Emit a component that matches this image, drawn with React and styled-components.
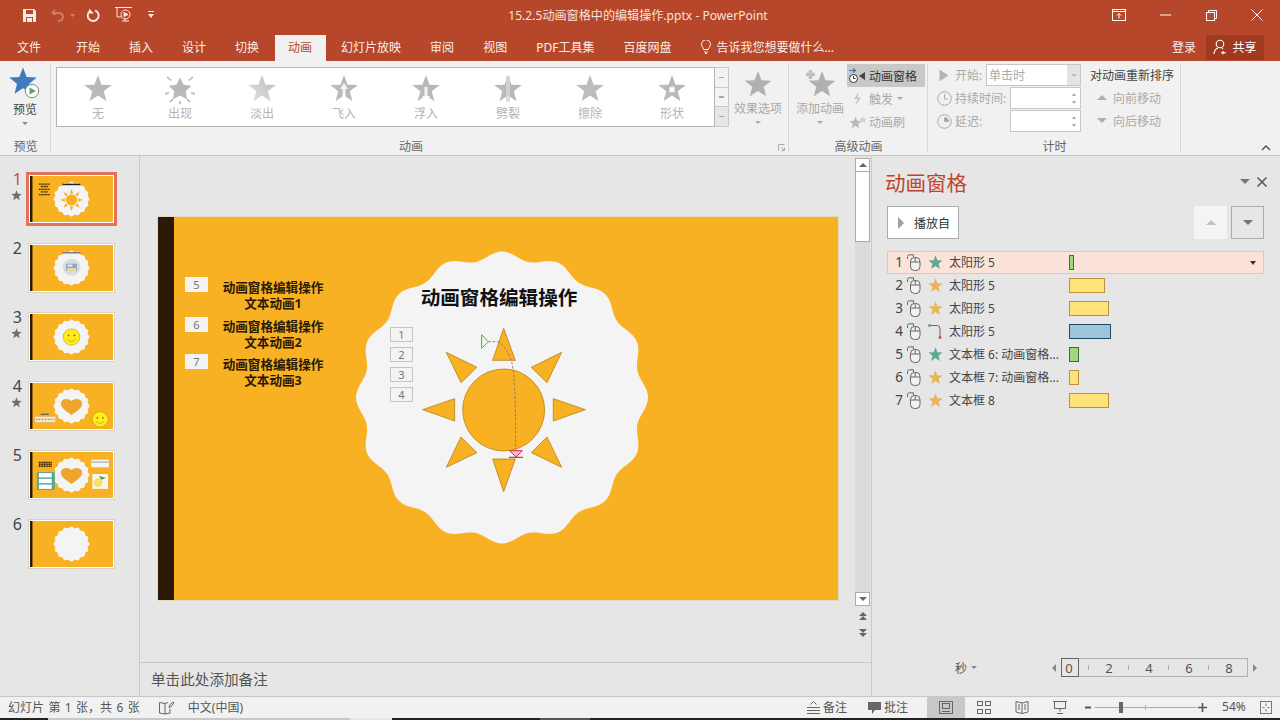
import React from "react";
import styled, { createGlobalStyle } from "styled-components";

const FONT = `"Noto Sans", "Noto Sans CJK SC", sans-serif`;

const GlobalStyle = createGlobalStyle`
  html, body { margin: 0; padding: 0; background: #e6e6e6; }
  body { font-family: ${FONT}; font-size: 12px; color: #444; }
  * { box-sizing: border-box; }
`;

const starPoints = (cx, cy, R, r = R * 0.42) => {
  const pts = [];
  for (let i = 0; i < 10; i++) {
    const a = -Math.PI / 2 + (i * Math.PI) / 5;
    const rad = i % 2 ? r : R;
    pts.push(`${(cx + rad * Math.cos(a)).toFixed(2)},${(cy + rad * Math.sin(a)).toFixed(2)}`);
  }
  return pts.join(" ");
};

const blobPath = (cx, cy, R, amp, lobes = 16) => {
  const pts = [];
  for (let i = 0; i < 320; i++) {
    const t = (i / 320) * Math.PI * 2;
    const rad = R + amp * Math.cos(lobes * t);
    pts.push(`${(cx + rad * Math.sin(t)).toFixed(2)} ${(cy - rad * Math.cos(t)).toFixed(2)}`);
  }
  return `M${pts.join("L")}Z`;
};

const Page = styled.div`
  width: 1280px;
  height: 720px;
  overflow: hidden;
  display: flex;
  flex-direction: column;
  background: #e6e6e6;
`;

/* title bar */
const TitleBar = styled.div`
  height: 35px;
  padding-bottom: 5px;
  background: #b7472a;
  display: grid;
  grid-template-columns: 1fr auto 1fr;
  align-items: center;
  color: #fff;
`;

const Qat = styled.div`
  display: flex;
  align-items: center;
  padding-left: 22px;
`;

const QatIcon = styled.svg`
  display: block;
  margin-right: ${(p) => p.$gap || 0}px;
  flex: none;
`;

const DocTitle = styled.div`
  font-size: 12.1px;
  color: #f6e3dc;
  padding-right: 4px;
`;

const WindowButtons = styled.div`
  display: flex;
  justify-content: flex-end;
  align-items: center;
`;

const WinBtn = styled.div`
  width: 46px;
  height: 30px;
  display: flex;
  align-items: center;
  justify-content: center;
`;

/* tabs */
const TabRow = styled.div`
  height: 26px;
  background: #b7472a;
  display: flex;
  align-items: stretch;
  padding-left: 3.5px;
  gap: 2px;
  color: #fbeee9;
  font-size: 12px;
`;

const Tab = styled.div`
  padding: 0 13.5px;
  display: flex;
  align-items: center;
  gap: 4px;
  white-space: nowrap;
  padding-bottom: 2px;
  background: ${(p) => (p.$active ? "#f1f1f1" : "transparent")};
  color: ${(p) => (p.$active ? "#b7472a" : "inherit")};
  margin-right: ${(p) => p.$after || 0}px;
`;

const TabSpacer = styled.div`
  flex: 1;
`;

const SignIn = styled.div`
  display: flex;
  align-items: center;
  padding-right: 8px;
  padding-bottom: 2px;
`;

const Share = styled.div`
  width: 58px;
  height: 25px;
  margin-right: 16px;
  background: #a0391f;
  display: flex;
  align-items: center;
  justify-content: center;
  gap: 3px;
  color: #fff;
  padding-bottom: 2px;
`;

/* ribbon */
const Ribbon = styled.div`
  height: 95px;
  background: #f1f1f1;
  border-bottom: 1px solid #c8c8c8;
  display: flex;
  position: relative;
`;

const Group = styled.div`
  width: ${(p) => p.$w}px;
  flex: none;
  display: flex;
  flex-direction: column;
  position: relative;
  &::after {
    content: "";
    position: absolute;
    right: 0;
    top: 3px;
    bottom: 3px;
    width: 1px;
    background: #d6d6d6;
  }
`;

const GroupBody = styled.div`
  height: 77px;
  display: flex;
  padding: 3px 0 0 ${(p) => p.$pl || 0}px;
`;

const GroupLabel = styled.div`
  flex: 1;
  display: flex;
  align-items: center;
  justify-content: center;
  color: #666;
  font-size: 12px;
  padding-right: ${(p) => p.$pr || 0}px;
`;

const BigBtn = styled.div`
  width: ${(p) => p.$w}px;
  display: flex;
  flex-direction: column;
  align-items: center;
  color: ${(p) => (p.$dim ? "#a9a9a9" : "#444")};
  font-size: 12px;
  margin-left: ${(p) => p.$ml || 0}px;
  padding-top: ${(p) => p.$pt || 0}px;
  svg { display: block; }
`;

const BigLabel = styled.div`
  line-height: 16px;
  margin-top: ${(p) => p.$mt || 0}px;
  white-space: nowrap;
`;

const Caret = styled.div`
  width: 0;
  height: 0;
  border-left: 3px solid transparent;
  border-right: 3px solid transparent;
  border-top: 3px solid ${(p) => p.$c || "#888"};
  margin-top: ${(p) => (p.$inline ? 0 : 4)}px;
  margin-left: ${(p) => (p.$inline ? 2 : 0)}px;
`;

const Gallery = styled.div`
  width: 659px;
  height: 60px;
  margin-top: 3px;
  border: 1px solid #b5b5b5;
  background: #fff;
  display: flex;
`;

const GalleryItem = styled.div`
  width: 82px;
  display: flex;
  flex-direction: column;
  align-items: center;
  color: #b4b4b4;
  padding-top: 6px;
  font-size: 12px;
  line-height: 14px;
  svg { display: block; margin-bottom: 3px; }
`;

const GalleryScroll = styled.div`
  width: 14px;
  height: 60px;
  margin-top: 3px;
  display: flex;
  flex-direction: column;
  border: 1px solid #c9c9c9;
  border-left: none;
`;

const ScrollCell = styled.div`
  flex: 1;
  display: flex;
  align-items: center;
  justify-content: center;
  background: ${(p) => (p.$shade ? "#e6e6e6" : "#f3f3f3")};
  & + & { border-top: 1px solid #c9c9c9; }
  &::before {
    content: "";
    width: 5px;
    height: 1.5px;
    background: #aaa;
  }
`;

const Launcher = styled.svg`
  position: absolute;
  right: 4px;
  bottom: 4px;
`;

const SmallCol = styled.div`
  width: 78px;
  margin-left: 2px;
  display: flex;
  flex-direction: column;
`;

const SmallBtn = styled.div`
  height: 23px;
  display: flex;
  align-items: center;
  gap: 2px;
  padding-left: 2px;
  white-space: nowrap;
  color: ${(p) => (p.$on ? "#333" : "#a9a9a9")};
  background: ${(p) => (p.$on ? "#c8c8c8" : "transparent")};
  svg { flex: none; }
`;

const TimingCol = styled.div`
  width: 145px;
  margin-left: 8px;
  display: flex;
  flex-direction: column;
  gap: 1px;
`;

const TimingRow = styled.div`
  height: 22px;
  display: flex;
  align-items: center;
  color: #a9a9a9;
  gap: 3px;
  white-space: nowrap;
`;

const RowIconBox = styled.div`
  width: 16px;
  display: flex;
  justify-content: center;
  flex: none;
`;

const Field = styled.div`
  margin-left: auto;
  width: ${(p) => p.$w}px;
  height: 22px;
  background: #fff;
  border: 1px solid #c6c6c6;
  display: flex;
  align-items: center;
  padding-left: 2px;
  color: #a9a9a9;
`;

const FieldDrop = styled.div`
  width: 13px;
  align-self: stretch;
  margin-left: auto;
  background: #e4e4e4;
  display: flex;
  align-items: center;
  justify-content: center;
`;

const Spin = styled.div`
  margin-left: auto;
  width: 13px;
  display: flex;
  flex-direction: column;
  align-items: center;
  gap: 5px;
`;

const Tri = styled.div`
  width: 0;
  height: 0;
  border-left: ${(p) => p.$s || 3}px solid transparent;
  border-right: ${(p) => p.$s || 3}px solid transparent;
  ${(p) => (p.$up ? "border-bottom" : "border-top")}: ${(p) => p.$h || 3}px solid ${(p) => p.$c || "#999"};
`;

const ReorderCol = styled.div`
  margin-left: 9px;
  width: 90px;
  display: flex;
  flex-direction: column;
`;

const ReorderHead = styled.div`
  height: 22px;
  display: flex;
  align-items: center;
  color: #444;
  white-space: nowrap;
`;

const ReorderRow = styled.div`
  height: 23px;
  display: flex;
  align-items: center;
  gap: 6px;
  padding-left: 7px;
  color: #a9a9a9;
`;

const Collapse = styled.svg`
  position: absolute;
  right: 9px;
  bottom: 4px;
`;

/* main */
const Main = styled.div`
  flex: 1;
  min-height: 0;
  display: flex;
`;

const ThumbPane = styled.div`
  width: 140px;
  flex: none;
  border-right: 1px solid #c9c9c9;
  padding-top: 18px;
  background: #e6e6e6;
`;

const ThumbRow = styled.div`
  height: 69px;
  display: flex;
`;

const ThumbMeta = styled.div`
  width: 28px;
  flex: none;
  display: flex;
  flex-direction: column;
  align-items: flex-end;
  padding-right: 6px;
`;

const ThumbNum = styled.div`
  font-size: 16px;
  line-height: 14px;
  margin-top: -2px;
  color: ${(p) => (p.$on ? "#c0533a" : "#444")};
`;

const MiniStar = styled.svg`
  margin-top: 4px;
  display: block;
`;

const ThumbFrame = styled.div`
  width: 87px;
  height: 50px;
  border: 1px solid #d8d3c7;
  outline: ${(p) => (p.$on ? "3px solid #e2735a" : "none")};
  outline-offset: -1px;
  background: #fff;
  padding: 1px;
  svg { display: block; }
`;

const Editor = styled.div`
  flex: 1;
  min-width: 0;
  display: flex;
  flex-direction: column;
`;

const SlideArea = styled.div`
  flex: 1;
  min-height: 0;
  display: flex;
`;

const SlideWrap = styled.div`
  flex: 1;
  padding: 60px 0 0 17px;
`;

const Slide = styled.div`
  position: relative;
  width: 682px;
  height: 385px;
  background: #f8b122;
  border: 1px solid #e3d9c4;
  overflow: hidden;
`;

const SlideArt = styled.svg`
  position: absolute;
  left: 0;
  top: 0;
`;

const AnimTag = styled.div`
  position: absolute;
  left: ${(p) => p.$x}px;
  top: ${(p) => p.$y}px;
  width: 23px;
  height: 15px;
  background: #f3f3f3;
  border: 1px solid ${(p) => (p.$boxed ? "#c4c4c4" : "#f3f3f3")};
  color: #777;
  font-size: 11px;
  line-height: 13px;
  text-align: center;
`;

const SideText = styled.div`
  position: absolute;
  left: 55px;
  top: ${(p) => p.$y}px;
  width: 120px;
  text-align: center;
  color: #2a1a05;
  font-weight: 700;
  font-size: 12.6px;
  line-height: 16px;
`;

const SlideTitle = styled.div`
  position: absolute;
  left: 241px;
  top: 67px;
  width: 200px;
  text-align: center;
  color: #111;
  font-weight: 700;
  font-size: 19.6px;
  line-height: 28px;
`;

const VScroll = styled.div`
  width: 15px;
  flex: none;
  margin: 2px 1px 0 0;
  display: flex;
  flex-direction: column;
  align-items: stretch;
`;

const VBtn = styled.div`
  height: 14px;
  background: #fff;
  border: 1px solid #ababab;
  display: flex;
  align-items: center;
  justify-content: center;
  flex: none;
`;

const VThumb = styled.div`
  height: 70px;
  background: #fff;
  border: 1px solid #ababab;
  border-top: none;
  flex: none;
`;

const VTrack = styled.div`
  height: 350px;
  background: #dbdbdb;
  flex: none;
`;

const VNav = styled.svg`
  display: block;
  margin: ${(p) => p.$mt}px auto 0;
`;

const Notes = styled.div`
  height: 34px;
  flex: none;
  border-top: 1px solid #c9c9c9;
  padding: 0 0 2px 11px;
  display: flex;
  align-items: center;
  color: #555;
  font-size: 14.6px;
`;

/* animation pane */
const Pane = styled.div`
  width: 409px;
  flex: none;
  border-left: 1px solid #c9c9c9;
  padding: 0 16px 0 15px;
  display: flex;
  flex-direction: column;
`;

const PaneHead = styled.div`
  height: 50px;
  display: flex;
  align-items: center;
  justify-content: space-between;
  padding-top: 1px;
`;

const PaneTitle = styled.div`
  font-size: 20.5px;
  color: #c0432a;
  margin-left: -2px;
`;

const PaneTools = styled.div`
  display: flex;
  align-items: center;
  gap: 7px;
  margin-right: -3px;
`;

const PaneToolbar = styled.div`
  display: flex;
  align-items: center;
  gap: 4px;
  height: 33px;
  margin-bottom: 12px;
`;

const PlayBtn = styled.div`
  width: 72px;
  height: 33px;
  background: #fff;
  border: 1px solid #ababab;
  display: flex;
  align-items: center;
  padding-left: 10px;
  gap: 10px;
  color: #333;
  margin-right: auto;
`;

const MoveBtn = styled.div`
  width: 33px;
  height: 33px;
  background: ${(p) => (p.$on ? "transparent" : "#f4f4f4")};
  border: 1px solid ${(p) => (p.$on ? "#ababab" : "#f4f4f4")};
  display: flex;
  align-items: center;
  justify-content: center;
`;

const AnimRow = styled.div`
  height: 23px;
  display: flex;
  align-items: center;
  position: relative;
  background: ${(p) => (p.$on ? "#fce3d9" : "transparent")};
  outline: ${(p) => (p.$on ? "1px solid #f0c0aa" : "none")};
  outline-offset: -1px;
  color: #444;
`;

const AnimNum = styled.div`
  width: 16px;
  text-align: right;
  font-size: 13.5px;
  flex: none;
  margin-top: -2px;
`;

const AnimIcons = styled.div`
  width: 45px;
  flex: none;
  display: flex;
  align-items: center;
  padding-left: 4px;
  gap: 7px;
`;

const AnimName = styled.div`
  width: 121px;
  flex: none;
  white-space: nowrap;
  overflow: hidden;
  font-size: 12px;
  padding-left: 1px;
  margin-top: -2px;
`;

const AnimBar = styled.div`
  height: 15px;
  width: ${(p) => p.$w}px;
  background: ${(p) => p.$bg};
  border: 1px solid ${(p) => p.$bd};
`;

const RowCaret = styled.div`
  position: absolute;
  right: 8px;
  top: 10px;
  width: 0;
  height: 0;
  border-left: 3.5px solid transparent;
  border-right: 3.5px solid transparent;
  border-top: 4px solid #333;
`;

const Timeline = styled.div`
  margin-top: auto;
  height: 38px;
  display: flex;
  align-items: flex-start;
  color: #555;
`;

const TimeUnit = styled.div`
  width: 91px;
  margin-left: 68px;
  height: 19px;
  display: flex;
  align-items: center;
  gap: 4px;
`;

const TimeArrow = styled.div`
  height: 19px;
  width: ${(p) => p.$w || 13}px;
  display: flex;
  align-items: center;
  justify-content: center;
`;

const LeftTri = styled.div`
  width: 0;
  height: 0;
  border-top: 4px solid transparent;
  border-bottom: 4px solid transparent;
  ${(p) => (p.$right ? "border-left" : "border-right")}: 4px solid #888;
`;

const Scale = styled.div`
  width: 187px;
  height: 19px;
  border: 1px solid #b0b0b0;
  display: flex;
  position: relative;
`;

const ScaleCell = styled.div`
  width: 40px;
  flex: none;
  display: flex;
  align-items: center;
  justify-content: center;
  position: relative;
  font-size: 13px;
  margin-left: ${(p) => (p.$first ? -13 : 0)}px;
  &::after {
    content: "";
    position: absolute;
    right: 0;
    top: 6px;
    height: 5px;
    width: 1px;
    background: ${(p) => (p.$last ? "transparent" : "#aaa")};
  }
`;

const ZeroBox = styled.div`
  position: absolute;
  left: -1px;
  top: -1px;
  width: 18px;
  height: 19px;
  border: 1px solid #666;
`;

/* status bar */
const StatusBar = styled.div`
  height: 22px;
  flex: none;
  background: #f1f1f1;
  border-top: 1px solid #c6c6c6;
  display: flex;
  align-items: center;
  color: #555;
  font-size: 12px;
  padding-left: 8px;
`;

const StatusText = styled.div`
  white-space: nowrap;
  margin: -2px 0 0 ${(p) => p.$ml || 0}px;
  word-spacing: ${(p) => p.$ws || 0}px;
`;

const StatusBtn = styled.div`
  display: flex;
  align-items: center;
  gap: 3px;
  white-space: nowrap;
  margin-left: ${(p) => p.$ml || 0}px;
`;

const StatusIcon = styled.svg`
  margin-left: ${(p) => p.$ml || 0}px;
  flex: none;
`;

const ViewBtn = styled.div`
  width: 38px;
  height: 21px;
  display: flex;
  align-items: center;
  justify-content: center;
  background: ${(p) => (p.$on ? "#c8c8c8" : "transparent")};
  margin-left: ${(p) => p.$ml || 0}px;
`;

const ZoomSlider = styled.div`
  margin-left: 6px;
  width: 122px;
  height: 21px;
  display: flex;
  align-items: center;
  position: relative;
  color: #555;
`;

const ZoomTrack = styled.div`
  position: absolute;
  left: 10px;
  right: 10px;
  top: 10px;
  height: 1px;
  background: #aaa;
`;

const ZoomThumb = styled.div`
  position: absolute;
  left: 34px;
  top: 5px;
  width: 4px;
  height: 11px;
  background: #666;
`;

const ZoomTick = styled.div`
  position: absolute;
  left: 60px;
  top: 8px;
  width: 1px;
  height: 5px;
  background: #aaa;
`;

const ZoomSign = styled.svg`
  position: absolute;
  top: 6px;
  ${(p) => (p.$right ? "right: 0;" : "left: 0;")}
`;

const Strip = styled.div`
  height: 2px;
  flex: none;
  display: flex;
`;

const StripPart = styled.div`
  width: ${(p) => p.$w}px;
  background: ${(p) => p.$c};
  flex: ${(p) => (p.$w ? "none" : "1")};
`;

const Star = ({ size = 14, fill = "#777" }) => (
  <svg width={size} height={size} viewBox="0 0 24 24">
    <polygon points={starPoints(12, 12.5, 12)} fill={fill} />
  </svg>
);

const MouseIcon = () => (
  <svg width="14" height="17" viewBox="0 0 14 17" fill="none" stroke="#666" strokeWidth="1">
    <path d="M0.5 5V2.5Q0.5 0.8 2.5 0.8H6.5V3" />
    <rect x="3.5" y="3.5" width="9.5" height="13" rx="4" fill="#f2f2f2" />
    <path d="M3.5 8H13M8.2 3.5V8" />
  </svg>
);

const PathIcon = () => (
  <svg width="15" height="17" viewBox="0 0 15 17" fill="none">
    <path d="M1.5 2.5H9Q12 2.5 12 6V14" stroke="#666" />
    <circle cx="1.5" cy="2.5" r="1.4" fill="#5aa27c" />
    <circle cx="12" cy="14.5" r="1.4" fill="#c0533a" />
  </svg>
);

const galleryExtras = {
  burst: (
    <g stroke="#b5b5b5" strokeWidth="1.6">
      <path d="M2 3L6 6.5M28 3L24 6.5M0 20L4 18.5M30 20L26 18.5M15 30V27M5 28L8 25M25 28L22 25" />
    </g>
  ),
  fly: <path d="M15 9L11 15H13.5V26H16.5V15H19Z" fill="#fff" opacity="0.85" />,
  float: <path d="M15 28L11 22H13.5V13H16.5V22H19Z" fill="#fff" opacity="0.85" />,
  shape: <rect x="12.5" y="13" width="5" height="5" fill="#fff" stroke="#ddd" />,
};

const GalleryStar = ({ kind, id }) => (
  <svg width="30" height="30" viewBox="0 0 30 30">
    <defs>
      <linearGradient id={id} x1="0" x2="1" y1="1" y2="0">
        <stop offset="0" stopColor={kind === "fade" ? "#e0e0e0" : "#bdbdbd"} />
        <stop offset="1" stopColor={kind === "fade" || kind === "wipe" ? "#bcbcbc" : "#b4b4b4"} />
      </linearGradient>
    </defs>
    <polygon points={starPoints(15, 15.5, kind === "burst" ? 12 : 14.5, 6)} fill={`url(#${id})`} />
    {kind === "split" && <rect x="13" y="2" width="4" height="26" fill="#d6d6d6" opacity="0.8" />}
    {galleryExtras[kind]}
  </svg>
);

const Sun = ({ tiny }) => (
  <g transform={tiny ? "translate(42,25) scale(0.046) translate(-461,-495)" : "translate(350,245) scale(0.3333)"}>
    <circle cx="461" cy="495" r="123" fill="#f8b122" stroke="#b98418" strokeWidth="2.5" />
    {[
      "461,250 428,346 496,346",
      "289,322 381,367 333,413",
      "635,322 544,367 591,413",
      "218,494 314,461 314,528",
      "706,494 610,461 610,528",
      "289,667 333,576 381,623",
      "635,667 591,576 544,623",
      "461,740 428,642 496,642",
    ].map((p) => (
      <polygon key={p} points={p} fill="#f8b122" stroke="#b98418" strokeWidth="2.5" />
    ))}
  </g>
);

const Smiley = ({ cx, cy, r }) => (
  <g>
    <circle cx={cx} cy={cy} r={r} fill="#ffec18" stroke="#a88c10" strokeWidth="0.5" />
    <circle cx={cx - r * 0.35} cy={cy - r * 0.2} r={r * 0.1} fill="#555" />
    <circle cx={cx + r * 0.35} cy={cy - r * 0.2} r={r * 0.1} fill="#555" />
    <path d={`M${cx - r * 0.5} ${cy + r * 0.25}Q${cx} ${cy + r * 0.8} ${cx + r * 0.5} ${cy + r * 0.25}`} fill="none" stroke="#777" strokeWidth="0.5" />
  </g>
);

const Heart = () => (
  <path d="M42 33C36 29 31.5 26 31.5 21.5C31.5 17 37.5 15.5 42 19C46.5 15.5 52.5 17 52.5 21.5C52.5 26 48 29 42 33Z" fill="#f0a52a" stroke="#c98e20" strokeWidth="0.3" />
);

const thumbContent = [
  <g key="1">
    <Sun tiny />
    <rect x="33" y="8" width="18" height="1.6" fill="#222" />
    <path d="M9 8.5H20M11 11H18M9 14H20M11 16.5H18M9 19.5H20" stroke="#2a1a05" strokeWidth="1.4" strokeDasharray="1 0.5" />
  </g>,
  <g key="2">
    <rect x="33" y="7.5" width="18" height="1.3" fill="#666" />
    <circle cx="42" cy="23" r="9" fill="#dcdcdc" />
    <rect x="36.5" y="19.5" width="11" height="7.5" fill="#8aa8c8" />
    <rect x="37.5" y="24" width="9" height="3.5" fill="#e8d8a0" />
    <rect x="38" y="20.5" width="5" height="2" fill="#eee" />
  </g>,
  <g key="3">
    <Smiley cx={42} cy={24} r={8.5} />
  </g>,
  <g key="4">
    <Heart />
    <rect x="5" y="35" width="21" height="6" fill="#f4e8c0" stroke="#caa" strokeWidth="0.3" />
    <path d="M6 38H25" stroke="#777" strokeWidth="1" strokeDasharray="1.5 1.5" />
    <rect x="11" y="32" width="8" height="1.2" fill="#555" />
    <Smiley cx={71} cy={38} r={8} />
  </g>,
  <g key="5">
    <Heart />
    <path d="M9 11H22M9 13H22M9 15H22" stroke="#2a1a05" strokeWidth="1.5" strokeDasharray="1.2 0.5" />
    <rect x="7" y="21" width="18" height="18.5" fill="#4fa89a" />
    <rect x="9" y="22" width="13" height="4.5" fill="#fff" />
    <rect x="9" y="28" width="13" height="4.5" fill="#fff" />
    <rect x="9" y="34" width="13" height="4.5" fill="#fff" />
    <rect x="62" y="8" width="18" height="8" fill="#f4f4f0" />
    <rect x="62" y="10" width="18" height="1" fill="#999" />
    <rect x="63" y="23" width="16" height="15.5" fill="#f6f6f0" />
    <circle cx="69" cy="32" r="4.5" fill="#f5e06a" />
    <path d="M70 25L77 27L72 29Z" fill="#5a9a3a" />
  </g>,
  null,
];

const thumbs = [
  { star: true, on: true },
  { star: false },
  { star: true },
  { star: true },
  { star: false },
  { star: false },
];

const Thumb = ({ index, on }) => (
  <ThumbFrame $on={on}>
    <svg width="83" height="46" viewBox="0 0 84 48" preserveAspectRatio="none">
      <rect width="84" height="48" fill="#f8b122" />
      <rect x="0" width="2.5" height="48" fill="#2b1a05" />
      <path d={blobPath(42, 24, 17.5, 0.7)} fill="#f4f4f4" />
      {thumbContent[index]}
    </svg>
  </ThumbFrame>
);

const anims = [
  { n: 1, name: "太阳形 5", star: "#5fa88f", w: 5, bg: "#a0d880", bd: "#4a6a3c", on: true },
  { n: 2, name: "太阳形 5", star: "#e8b45c", w: 36, bg: "#ffe27a", bd: "#b8923c" },
  { n: 3, name: "太阳形 5", star: "#e8b45c", w: 40, bg: "#ffe27a", bd: "#b8923c" },
  { n: 4, name: "太阳形 5", path: true, w: 42, bg: "#9ec5da", bd: "#1f4a66" },
  { n: 5, name: "文本框 6: 动画窗格...", star: "#5fa88f", w: 10, bg: "#a0d880", bd: "#3f6a38" },
  { n: 6, name: "文本框 7: 动画窗格...", star: "#e8b45c", w: 10, bg: "#ffe27a", bd: "#b8923c" },
  { n: 7, name: "文本框 8", star: "#e8b45c", w: 40, bg: "#ffe27a", bd: "#b8923c" },
];

const galleryItems = [
  ["无", "none"],
  ["出现", "burst"],
  ["淡出", "fade"],
  ["飞入", "fly"],
  ["浮入", "float"],
  ["劈裂", "split"],
  ["擦除", "wipe"],
  ["形状", "shape"],
];

export default function App() {
  return (
    <Page>
      <GlobalStyle />
      <TitleBar>
        <Qat>
          <QatIcon width="15" height="15" viewBox="0 0 15 15" $gap={14}>
            <path d="M1 1H12L14 3V14H1Z" fill="#fbe9e3" />
            <rect x="4" y="2" width="7" height="4" fill="#b7472a" />
            <rect x="4" y="9" width="7" height="5" fill="#b7472a" />
            <rect x="5" y="10" width="5" height="4" fill="#fbe9e3" />
          </QatIcon>
          <QatIcon width="24" height="14" viewBox="0 0 24 14" fill="none" $gap={11}>
            <path d="M4 2L1.5 5L5 6.5M2 5.2H8Q12 5.2 12 9T7 13" stroke="#d1806a" strokeWidth="1.8" />
            <path d="M19 6H24L21.5 9Z" fill="#d1806a" />
          </QatIcon>
          <QatIcon width="15" height="15" viewBox="0 0 15 15" fill="none" $gap={13}>
            <path d="M9 2.3A5.5 5.5 0 1 1 4 3" stroke="#fbe9e3" strokeWidth="1.9" />
            <path d="M3 0.5V5.5H8Z" fill="#fbe9e3" />
          </QatIcon>
          <QatIcon width="20" height="20" viewBox="0 0 20 20" fill="none" stroke="#fbe9e3" strokeWidth="1" $gap={14}>
            <path d="M1 2.5H18M3 2.5V12H7M8 16H15M11 13V16" />
            <circle cx="11.5" cy="9.5" r="4.5" />
            <path d="M10 7.5L14 9.5L10 11.5Z" fill="#fbe9e3" />
          </QatIcon>
          <QatIcon width="6" height="8" viewBox="0 0 6 8">
            <rect y="0" width="6" height="1" fill="#fbe9e3" />
            <path d="M0 3H6L3 7Z" fill="#fbe9e3" />
          </QatIcon>
        </Qat>
        <DocTitle>15.2.5动画窗格中的编辑操作.pptx - PowerPoint</DocTitle>
        <WindowButtons>
          <WinBtn>
            <svg width="14" height="12" viewBox="0 0 14 12" fill="none" stroke="#fff">
              <rect x="0.5" y="0.5" width="13" height="11" />
              <path d="M0.5 2.5H13.5M7 9.5V4.5M5 6.5L7 4.5L9 6.5" />
            </svg>
          </WinBtn>
          <WinBtn>
            <svg width="11" height="2" viewBox="0 0 11 2">
              <rect y="0.5" width="11" height="1" fill="#fff" />
            </svg>
          </WinBtn>
          <WinBtn>
            <svg width="11" height="11" viewBox="0 0 11 11" fill="none" stroke="#fff">
              <path d="M2.5 2.5V0.5H10.5V8.5H8.5" />
              <rect x="0.5" y="2.5" width="8" height="8" />
            </svg>
          </WinBtn>
          <WinBtn>
            <svg width="12" height="12" viewBox="0 0 12 12" stroke="#fff">
              <path d="M0.5 0.5L11.5 11.5M11.5 0.5L0.5 11.5" />
            </svg>
          </WinBtn>
        </WindowButtons>
      </TitleBar>

      <TabRow>
        <Tab $after={6}>文件</Tab>
        <Tab>开始</Tab>
        <Tab>插入</Tab>
        <Tab>设计</Tab>
        <Tab>切换</Tab>
        <Tab $active>动画</Tab>
        <Tab>幻灯片放映</Tab>
        <Tab>审阅</Tab>
        <Tab>视图</Tab>
        <Tab>PDF工具集</Tab>
        <Tab>百度网盘</Tab>
        <Tab>
          <svg width="12" height="14" viewBox="0 0 12 14" fill="none" stroke="#fbeee9">
            <path d="M3.5 9.5Q3.5 8 2.3 6.8A4.5 4.5 0 1 1 9.7 6.8Q8.5 8 8.5 9.5ZM4 12H8M5 13.5H7" />
          </svg>
          告诉我您想要做什么...
        </Tab>
        <TabSpacer />
        <SignIn>登录</SignIn>
        <Share>
          <svg width="16" height="16" viewBox="0 0 16 16" fill="none" stroke="#fff" strokeWidth="1.1">
            <circle cx="7" cy="5" r="3.8" />
            <path d="M1 15Q1.5 10 5 9M9 9.2L10 10M10 12V15.5M8 13.7H13" />
          </svg>
          共享
        </Share>
      </TabRow>

      <Ribbon>
        <Group $w={51}>
          <GroupBody>
            <BigBtn $w={50} $pt={3}>
              <svg width="34" height="34" viewBox="0 0 34 34">
                <polygon points={starPoints(15, 15, 14.5, 6.3)} fill="#3f7cbf" />
                <circle cx="24" cy="24" r="6.7" fill="#fff" stroke="#7a8a80" />
                <path d="M21.5 20.5L28 24L21.5 27.5Z" fill="#4ea672" />
              </svg>
              <BigLabel $mt={1}>预览</BigLabel>
              <Caret />
            </BigBtn>
          </GroupBody>
          <GroupLabel>预览</GroupLabel>
        </Group>

        <Group $w={738}>
          <GroupBody $pl={5}>
            <Gallery>
              {galleryItems.map(([label, kind]) => (
                <GalleryItem key={kind}>
                  <GalleryStar kind={kind} id={`g-${kind}`} />
                  {label}
                </GalleryItem>
              ))}
            </Gallery>
            <GalleryScroll>
              <ScrollCell />
              <ScrollCell />
              <ScrollCell $shade />
            </GalleryScroll>
            <BigBtn $w={50} $dim $ml={4} $pt={5}>
              <svg width="30" height="30" viewBox="0 0 30 30">
                <polygon points={starPoints(15, 16, 14, 6)} fill="#b0b0b0" />
              </svg>
              <BigLabel $mt={2}>效果选项</BigLabel>
              <Caret $c="#aaa" />
            </BigBtn>
          </GroupBody>
          <GroupLabel $pr={18}>动画</GroupLabel>
          <Launcher width="7" height="7" viewBox="0 0 7 7" fill="none" stroke="#aaa">
            <path d="M0.5 6.5V0.5H6.5M3 3L6.5 6.5M6.5 3.5V6.5H3.5" />
          </Launcher>
        </Group>

        <Group $w={139}>
          <GroupBody $pl={6}>
            <BigBtn $w={50} $dim $pt={5}>
              <svg width="34" height="30" viewBox="0 0 34 30">
                <polygon points={starPoints(19, 16, 14, 6)} fill="#b0b0b0" />
                <path d="M3 5.5H12M7.5 1V10" stroke="#c0c0c0" strokeWidth="3.4" />
              </svg>
              <BigLabel $mt={2}>添加动画</BigLabel>
              <Caret $c="#aaa" />
            </BigBtn>
            <SmallCol>
              <SmallBtn $on>
                <svg width="18" height="16" viewBox="0 0 18 16" fill="none">
                  <path d="M0 2.5H6M4 0.5L6.5 2.5L4 4.5" stroke="#3b78b5" strokeWidth="1.2" />
                  <circle cx="4.5" cy="10.5" r="4" fill="#fff" stroke="#333" />
                  <path d="M4.5 8V10.5H6.5" stroke="#333" />
                  <path d="M16 4V12L10 8Z" fill="#444" />
                </svg>
                动画窗格
              </SmallBtn>
              <SmallBtn>
                <svg width="18" height="16" viewBox="0 0 18 16">
                  <path d="M10 1L5 8H8.5L6 15L12 6.5H8.5Z" fill="#c6c6c6" />
                </svg>
                触发
                <Caret $c="#aaa" $inline />
              </SmallBtn>
              <SmallBtn>
                <svg width="18" height="16" viewBox="0 0 18 16">
                  <polygon points={starPoints(6.5, 9, 6.5, 2.8)} fill="#b8b8b8" />
                  <polygon points={starPoints(14, 6, 4, 1.8)} fill="#cfcfcf" />
                </svg>
                动画刷
              </SmallBtn>
            </SmallCol>
          </GroupBody>
          <GroupLabel>高级动画</GroupLabel>
        </Group>

        <Group $w={253}>
          <GroupBody>
            <TimingCol>
              <TimingRow>
                <RowIconBox>
                  <svg width="10" height="13" viewBox="0 0 10 13">
                    <path d="M0.5 0.5L9.5 6.5L0.5 12.5Z" fill="#b5b5b5" />
                  </svg>
                </RowIconBox>
                开始:
                <Field $w={95}>
                  单击时
                  <FieldDrop>
                    <Tri $c="#bbb" />
                  </FieldDrop>
                </Field>
              </TimingRow>
              <TimingRow>
                <RowIconBox>
                  <svg width="15" height="15" viewBox="0 0 15 15" fill="none" stroke="#aaa">
                    <circle cx="7.5" cy="7.5" r="6.8" />
                    <path d="M7.5 3V8H11" />
                  </svg>
                </RowIconBox>
                持续时间:
                <Field $w={71}>
                  <Spin>
                    <Tri $up $s={2.5} $c="#aaa" />
                    <Tri $s={2.5} $c="#aaa" />
                  </Spin>
                </Field>
              </TimingRow>
              <TimingRow>
                <RowIconBox>
                  <svg width="15" height="15" viewBox="0 0 15 15" fill="none" stroke="#aaa">
                    <circle cx="7.5" cy="7.5" r="6.8" />
                    <path d="M7.5 3.5A4 4 0 0 1 11.5 7.5H7.5Z" fill="#aaa" />
                  </svg>
                </RowIconBox>
                延迟:
                <Field $w={71}>
                  <Spin>
                    <Tri $up $s={2.5} $c="#aaa" />
                    <Tri $s={2.5} $c="#aaa" />
                  </Spin>
                </Field>
              </TimingRow>
            </TimingCol>
            <ReorderCol>
              <ReorderHead>对动画重新排序</ReorderHead>
              <ReorderRow>
                <Tri $up $s={5} $h={5} $c="#b0b0b0" />
                向前移动
              </ReorderRow>
              <ReorderRow>
                <Tri $s={5} $h={5} $c="#b0b0b0" />
                向后移动
              </ReorderRow>
            </ReorderCol>
          </GroupBody>
          <GroupLabel>计时</GroupLabel>
        </Group>
        <Collapse width="10" height="7" viewBox="0 0 10 7" fill="none" stroke="#555" strokeWidth="1.5">
          <path d="M1 6L5 2L9 6" />
        </Collapse>
      </Ribbon>

      <Main>
        <ThumbPane>
          {thumbs.map((t, i) => (
            <ThumbRow key={i}>
              <ThumbMeta>
                <ThumbNum $on={t.on}>{i + 1}</ThumbNum>
                {t.star && (
                  <MiniStar width="11" height="11" viewBox="0 0 24 24">
                    <polygon points={starPoints(12, 12.5, 12)} fill="#6e6e6e" />
                  </MiniStar>
                )}
              </ThumbMeta>
              <Thumb index={i} on={t.on} />
            </ThumbRow>
          ))}
        </ThumbPane>

        <Editor>
          <SlideArea>
            <SlideWrap>
              <Slide>
                <SlideArt width="682" height="385" viewBox="158 217 682 385">
                  <rect x="158" y="217" width="16" height="385" fill="#2b1a05" />
                  <path d={blobPath(502, 397.5, 142, 4)} fill="#f4f4f4" />
                  <Sun />
                  <g transform="translate(350,245) scale(0.3333)">
                    <path d="M415 290H445Q485 320 490 380Q497 430 497 620" fill="none" stroke="#8a6a70" strokeWidth="2.6" strokeDasharray="8 5" />
                    <path d="M395 269V310L415 290Z" fill="#eafbe4" stroke="#3fb83f" strokeWidth="3" />
                    <path d="M479 617H517L498 636Z" fill="#ffb6c6" stroke="#d81e4a" strokeWidth="2.8" />
                    <path d="M477 637H519" stroke="#d81e4a" strokeWidth="3.4" />
                  </g>
                </SlideArt>
                <AnimTag $x={27} $y={60}>5</AnimTag>
                <AnimTag $x={27} $y={100}>6</AnimTag>
                <AnimTag $x={27} $y={137}>7</AnimTag>
                <SideText $y={63}>
                  动画窗格编辑操作
                  <br />
                  文本动画1
                </SideText>
                <SideText $y={102}>
                  动画窗格编辑操作
                  <br />
                  文本动画2
                </SideText>
                <SideText $y={140}>
                  动画窗格编辑操作
                  <br />
                  文本动画3
                </SideText>
                <SlideTitle>动画窗格编辑操作</SlideTitle>
                <AnimTag $x={232} $y={110} $boxed>1</AnimTag>
                <AnimTag $x={232} $y={130} $boxed>2</AnimTag>
                <AnimTag $x={232} $y={150} $boxed>3</AnimTag>
                <AnimTag $x={232} $y={170} $boxed>4</AnimTag>
              </Slide>
            </SlideWrap>
            <VScroll>
              <VBtn>
                <Tri $up $s={4} $h={4} $c="#666" />
              </VBtn>
              <VThumb />
              <VTrack />
              <VBtn>
                <Tri $s={4} $h={4} $c="#666" />
              </VBtn>
              <VNav width="8" height="9" viewBox="0 0 8 9" fill="#666" $mt={6}>
                <path d="M4 0L8 4H0ZM4 4L8 8H0Z" />
              </VNav>
              <VNav width="8" height="9" viewBox="0 0 8 9" fill="#666" $mt={7}>
                <path d="M0 1H8L4 5ZM0 5H8L4 9Z" />
              </VNav>
            </VScroll>
          </SlideArea>
          <Notes>单击此处添加备注</Notes>
        </Editor>

        <Pane>
          <PaneHead>
            <PaneTitle>动画窗格</PaneTitle>
            <PaneTools>
              <Tri $s={5} $h={5} $c="#777" />
              <svg width="10" height="10" viewBox="0 0 10 10" stroke="#555" strokeWidth="1.5">
                <path d="M0.5 0.5L9.5 9.5M9.5 0.5L0.5 9.5" />
              </svg>
            </PaneTools>
          </PaneHead>
          <PaneToolbar>
            <PlayBtn>
              <svg width="6" height="12" viewBox="0 0 6 12">
                <path d="M0 0L6 6L0 12Z" fill="#a0a0a0" />
              </svg>
              播放自
            </PlayBtn>
            <MoveBtn>
              <Tri $up $s={5} $h={5} $c="#c0c0c0" />
            </MoveBtn>
            <MoveBtn $on>
              <Tri $s={5} $h={5} $c="#777" />
            </MoveBtn>
          </PaneToolbar>
          {anims.map((a) => (
            <AnimRow key={a.n} $on={a.on}>
              <AnimNum>{a.n}</AnimNum>
              <AnimIcons>
                <MouseIcon />
                {a.path ? <PathIcon /> : <Star size={15} fill={a.star} />}
              </AnimIcons>
              <AnimName>{a.name}</AnimName>
              <AnimBar $w={a.w} $bg={a.bg} $bd={a.bd} />
              {a.on && <RowCaret />}
            </AnimRow>
          ))}
          <Timeline>
            <TimeUnit>
              秒
              <Tri $c="#888" />
            </TimeUnit>
            <TimeArrow $w={15}>
              <LeftTri />
            </TimeArrow>
            <Scale>
              <ZeroBox />
              {[0, 2, 4, 6, 8].map((v) => (
                <ScaleCell key={v} $first={v === 0} $last={v === 8}>
                  {v}
                </ScaleCell>
              ))}
            </Scale>
            <TimeArrow>
              <LeftTri $right />
            </TimeArrow>
          </Timeline>
        </Pane>
      </Main>

      <StatusBar>
        <StatusText $ws={1.3}>幻灯片 第 1 张，共 6 张</StatusText>
        <StatusIcon width="16" height="14" viewBox="0 0 16 14" fill="none" stroke="#666" $ml={19}>
          <path d="M0.5 1.5L6 2.5V13L0.5 12ZM6 2.5L9 1.5M6 13L11 12V8M11 3.5L14 1L15 2L11.5 6L10 6.5Z" />
        </StatusIcon>
        <StatusText $ml={13}>中文(中国)</StatusText>
        <StatusBtn $ml={564}>
          <svg width="13" height="13" viewBox="0 0 13 13" stroke="#666" fill="none">
            <path d="M0 6.5H13M0 9.5H13M0 12.5H13M6.5 0.5L3.5 3.5M6.5 0.5L9.5 3.5" />
          </svg>
          <StatusText>备注</StatusText>
        </StatusBtn>
        <StatusBtn $ml={21}>
          <svg width="13" height="12" viewBox="0 0 13 12">
            <path d="M0 0H13V8H7L4 12V8H0Z" fill="#666" />
          </svg>
          <StatusText>批注</StatusText>
        </StatusBtn>
        <ViewBtn $on $ml={19}>
          <svg width="14" height="13" viewBox="0 0 14 13" fill="none" stroke="#666">
            <rect x="0.5" y="0.5" width="13" height="12" />
            <rect x="3.5" y="2.5" width="7" height="5" />
            <path d="M3 10.5H11" />
          </svg>
        </ViewBtn>
        <ViewBtn>
          <svg width="14" height="13" viewBox="0 0 14 13" fill="none" stroke="#666">
            <rect x="0.5" y="0.5" width="5" height="4" />
            <rect x="8.5" y="0.5" width="5" height="4" />
            <rect x="0.5" y="8.5" width="5" height="4" />
            <rect x="8.5" y="8.5" width="5" height="4" />
          </svg>
        </ViewBtn>
        <ViewBtn>
          <svg width="14" height="13" viewBox="0 0 14 13" fill="none" stroke="#666">
            <path d="M7 2L1 0.5V11L7 12.5L13 11V0.5L7 2V12.5M3 4H5M3 6H5M3 8H5M9 4H11M9 6H11M9 8H11" />
          </svg>
        </ViewBtn>
        <ViewBtn>
          <svg width="14" height="13" viewBox="0 0 14 13" fill="none" stroke="#666">
            <path d="M0 0.5H14M1.5 0.5V7.5H12.5V0.5M7 7.5V10.5M4 12.5H10" />
          </svg>
        </ViewBtn>
        <ZoomSlider>
          <ZoomSign width="6" height="9" viewBox="0 0 6 9">
            <rect y="3.5" width="6" height="2" fill="#555" />
          </ZoomSign>
          <ZoomTrack />
          <ZoomTick />
          <ZoomThumb />
          <ZoomSign $right width="9" height="9" viewBox="0 0 9 9">
            <path d="M0 3.7H9V5.3H0ZM3.7 0H5.3V9H3.7Z" fill="#555" />
          </ZoomSign>
        </ZoomSlider>
        <StatusText $ml={15}>54%</StatusText>
        <StatusIcon width="12" height="13" viewBox="0 0 12 13" fill="none" stroke="#777" $ml={14}>
          <rect x="0.5" y="0.5" width="11" height="12" />
          <path d="M6 2.5V5M6 8V10.5M2.5 6.5H4.5M7.5 6.5H9.5" />
        </StatusIcon>
      </StatusBar>
      <Strip>
        <StripPart $w={48} $c="#222" />
        <StripPart $w={302} $c="#c8c8c8" />
        <StripPart $w={42} $c="#e6e6e6" />
        <StripPart $w={148} $c="#222" />
        <StripPart $w={50} $c="#555" />
        <StripPart $c="#222" />
      </Strip>
    </Page>
  );
}
